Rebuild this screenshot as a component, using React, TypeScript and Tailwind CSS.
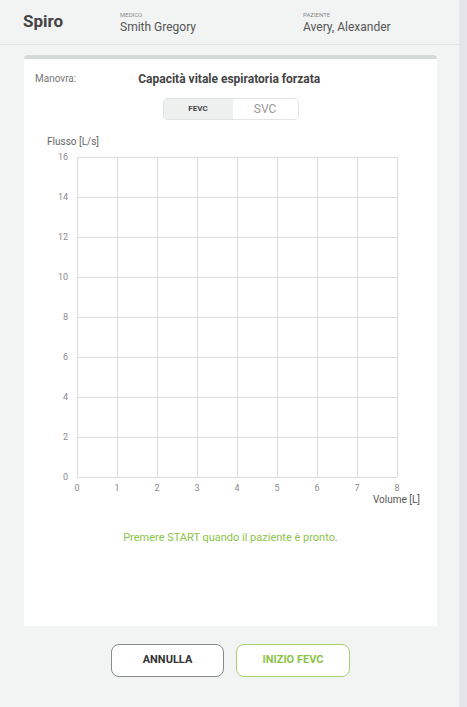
import React from 'react';

const FONT = { fontFamily: 'Roboto, "Liberation Sans", Arial, sans-serif' };

function Chart(): JSX.Element {
  const x0 = 53;
  const y0 = 26;
  const step = 40;
  const cols = Array.from({ length: 9 }, (_, i) => i);
  return (
    <svg width={413} height={380} className="block">
      <text x={23} y={14} fontSize={10} fill="#666">
        Flusso [L/s]
      </text>
      {cols.map((i) => (
        <line
          key={`v${i}`}
          x1={x0 + i * step + 0.5}
          x2={x0 + i * step + 0.5}
          y1={y0}
          y2={y0 + 8 * step}
          stroke="#dcdcdc"
          strokeWidth={1}
        />
      ))}
      {cols.map((i) => (
        <line
          key={`h${i}`}
          x1={x0}
          x2={x0 + 8 * step}
          y1={y0 + i * step + 0.5}
          y2={y0 + i * step + 0.5}
          stroke="#dcdcdc"
          strokeWidth={1}
        />
      ))}
      {cols.map((i) => (
        <text key={`yl${i}`} x={44} y={y0 + (8 - i) * step + 3} fontSize={9} fill="#8a8a8a" textAnchor="end">
          {i * 2}
        </text>
      ))}
      {cols.map((i) => (
        <text key={`xl${i}`} x={x0 + i * step} y={360} fontSize={9} fill="#8a8a8a" textAnchor="middle">
          {i}
        </text>
      ))}
      <text x={396} y={372} fontSize={10} fill="#555" textAnchor="end">
        Volume [L]
      </text>
    </svg>
  );
}

export default function App(): JSX.Element {
  return (
    <div className="flex h-[707px] w-[467px] overflow-hidden" style={FONT}>
      <div className="flex w-[459px] flex-col bg-[#f2f3f3]">
        {/* Header */}
        <div className="flex h-[45px] items-center border-b border-[#e3e6e6] pl-[23px]">
          <div className="w-[97px] text-[17px] font-bold text-[#444]">Spiro</div>
          <div className="flex w-[183px] flex-col pt-[1px]">
            <span className="text-[6px] uppercase leading-[8px] text-[#888]">Medico</span>
            <span className="text-[12px] leading-[16px] text-[#555]">Smith Gregory</span>
          </div>
          <div className="flex flex-col pt-[1px]">
            <span className="text-[6px] uppercase leading-[8px] text-[#888]">Paziente</span>
            <span className="text-[12px] leading-[16px] text-[#555]">Avery, Alexander</span>
          </div>
        </div>

        {/* Card */}
        <div className="ml-[24px] mt-[10px] flex h-[571px] w-[413px] flex-col rounded-t-sm border-t-4 border-[#d5dad8] bg-white">
          <div className="mt-[11px] flex h-[17px] items-center pl-[11px]">
            <span className="text-[10px] text-[#777]">Manovra:</span>
            <span className="ml-[62px] text-[12px] font-bold text-[#444]">Capacità vitale espiratoria forzata</span>
          </div>
          <div className="mt-[11px] flex justify-center">
            <div className="flex h-[22px] w-[136px] overflow-hidden rounded border border-[#e2e4e4]">
              <div className="flex w-[69px] items-center justify-center bg-[#eef0f0] text-[8px] font-bold text-[#444]">
                FEVC
              </div>
              <div className="flex flex-1 items-center justify-center bg-white text-[12px] text-[#999]">SVC</div>
            </div>
          </div>
          <div className="mt-[11px]">
            <Chart />
          </div>
          <div className="mt-[19px] text-center text-[11px] text-[#8bc34a]">
            Premere START quando il paziente è pronto.
          </div>
        </div>

        {/* Buttons */}
        <div className="mt-[18px] flex justify-center gap-[12px] pl-[2px]">
          <button className="h-[33px] w-[113px] rounded-lg border border-[#8a8a8a] bg-white text-[11px] font-bold text-[#333]">
            ANNULLA
          </button>
          <button className="h-[33px] w-[114px] rounded-lg border border-[#a5d36f] bg-white text-[11px] font-bold text-[#8bc34a]">
            INIZIO FEVC
          </button>
        </div>
      </div>
      <div className="w-[8px] bg-[#e5e5eb]" />
    </div>
  );
}
